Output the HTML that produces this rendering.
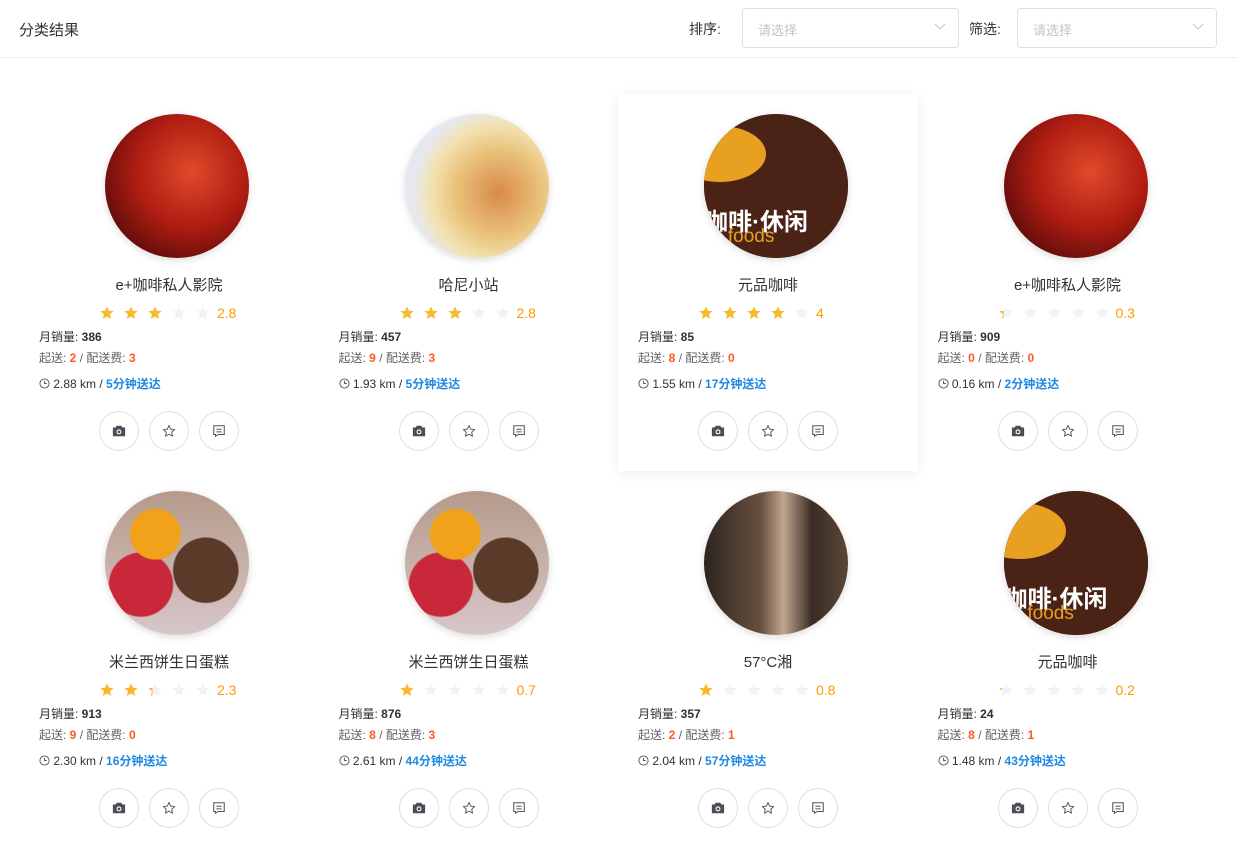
<!DOCTYPE html>
<html><head><meta charset="utf-8"><style>
*{box-sizing:border-box;margin:0;padding:0}
body{width:1237px;height:856px;overflow:hidden;background:#fff;font-family:"Liberation Sans","Noto Sans CJK SC",sans-serif;color:#303133}
.hd{height:58px;border-bottom:1px solid #ebeef5;position:relative}
.hd .t{position:absolute;left:19px;top:19px;font-size:15px;color:#303133}
.lab{position:absolute;top:19px;font-size:14px;color:#303133}
.sel{position:absolute;top:8px;height:40px;border:1px solid #dcdfe6;border-radius:4px;font-size:13px;color:#c0c4cc;padding:11px 15px}
.sel svg{position:absolute;right:12px;top:14px}
.card{position:absolute;width:300px;height:377px}
.card.hov{box-shadow:0 2px 12px rgba(0,0,0,.08)}
.img{position:absolute;left:86px;top:20px;width:144px;height:144px;border-radius:50%;overflow:hidden;box-shadow:0 2px 8px rgba(0,0,0,.15)}
.nm{position:absolute;left:0;width:300px;text-align:center;top:180px;font-size:15px;color:#303133}
.stars{position:absolute;left:80px;top:211px;height:16px;display:flex;align-items:center}
.stars svg{margin-right:8px}
.stars span{font-size:14px;color:#ff9900;margin-left:-2px}
.ln{position:absolute;left:20px;font-size:12px;color:#606266}
.ln b{color:#303133}
.or{color:#ff5722;font-weight:bold}
.bl{color:#1e88e5;font-weight:bold}
.btn{position:absolute;top:317px;width:40px;height:40px;border:1px solid #dcdfe6;border-radius:50%;display:flex;align-items:center;justify-content:center}
</style></head><body>
<div class="hd"><div class="t">分类结果</div>
<div class="lab" style="left:689px">排序:</div>
<div class="sel" style="left:742px;width:217px">请选择<svg width="12" height="8"><path d="M1 1l5 5 5-5" stroke="#c0c4cc" fill="none"/></svg></div>
<div class="lab" style="left:969px">筛选:</div>
<div class="sel" style="left:1017px;width:200px">请选择<svg width="12" height="8"><path d="M1 1l5 5 5-5" stroke="#c0c4cc" fill="none"/></svg></div>
</div>
<div id="g"></div>
<script>
const imgs={
cin:'radial-gradient(circle at 60% 40%,#e04b2a,#b01d12 45%,#5a0c0a 80%),#700',
piz:'radial-gradient(circle at 65% 55%,#d88a4a 0,#e9c27a 35%,#f2e2b0 55%,#e6e8f0 70%)',
cof:'',
cake:'radial-gradient(circle at 35% 30%,#f2a21a 0 18%,transparent 19%),radial-gradient(circle at 70% 55%,#5a3b2a 0 25%,transparent 26%),radial-gradient(circle at 25% 65%,#c8283a 0 22%,transparent 23%),linear-gradient(#b59a8a,#d8c6c8)',
rest:'linear-gradient(90deg,#2c2420,#6a5040 40%,#c0a890 55%,#3a2c24 75%,#5a4838)'};
const cofHTML='<div style="position:absolute;inset:0;background:#4a2216"></div><div style="position:absolute;left:-30px;top:12px;width:92px;height:56px;border-radius:50%;background:#e8a020"></div><div style="position:absolute;left:0;top:88px;font-size:24px;color:#fff;white-space:nowrap;font-weight:bold">咖啡·休闲</div><div style="position:absolute;left:8px;top:112px;font-size:19px;color:#e8a020;white-space:nowrap">e foods</div>';
const D=[
['cin','e+咖啡私人影院',2.8,'2.8',386,2,3,'2.88','5'],
['piz','哈尼小站',2.8,'2.8',457,9,3,'1.93','5'],
['cof','元品咖啡',4,'4',85,8,0,'1.55','17'],
['cin','e+咖啡私人影院',0.3,'0.3',909,0,0,'0.16','2'],
['cake','米兰西饼生日蛋糕',2.3,'2.3',913,9,0,'2.30','16'],
['cake','米兰西饼生日蛋糕',0.7,'0.7',876,8,3,'2.61','44'],
['rest','57°C湘',0.8,'0.8',357,2,1,'2.04','57'],
['cof','元品咖啡',0.2,'0.2',24,8,1,'1.48','43']];
const star=(f)=>{const id='s'+Math.random().toString(36).slice(2);return `<svg width="16" height="16" viewBox="0 0 24 24"><defs><linearGradient id="${id}"><stop offset="${f}" stop-color="#f7ba2a"/><stop offset="${f}" stop-color="#eff2f7"/></linearGradient></defs><path d="M12 2l2.9 6.6 7.1.6-5.4 4.7 1.6 7L12 17.3 5.8 21l1.6-7L2 9.2l7.1-.6z" fill="url(#${id})"/></svg>`};
let h='';
D.forEach((d,i)=>{const c=i%4,r=Math.floor(i/4);const x=19+c*299.5,y=94+r*377;
let st='';for(let k=0;k<5;k++){let f=Math.max(0,Math.min(1,d[2]-k));if(d[2]>=2.5&&d[2]<3&&k==2)f=1;if(d[2]>=0.5&&d[2]<1&&k==0)f=1;st+=star(f)}
const im=d[0]=='cof'?`<div class="img" style="background:#4a2216">${cofHTML}</div>`:`<div class="img" style="background:${imgs[d[0]]}"></div>`;
h+=`<div class="card${i==2?' hov':''}" style="left:${x}px;top:${y}px">${im}
<div class="nm">${d[1]}</div><div class="stars">${st}<span>${d[3]}</span></div>
<div class="ln" style="top:234px;color:#303133">月销量: <b>${d[4]}</b></div>
<div class="ln" style="top:255px">起送: <span class="or">${d[5]}</span> / 配送费: <span class="or">${d[6]}</span></div>
<div class="ln" style="top:281px;color:#303133"><svg width="11" height="11" viewBox="0 0 12 12" style="vertical-align:-1px"><circle cx="6" cy="6" r="5" fill="none" stroke="#555"/><path d="M6 3v3h2.5" fill="none" stroke="#555"/></svg> ${d[7]} km / <span class="bl">${d[8]}分钟送达</span></div>
<div class="btn" style="left:80px"><svg width="14" height="14" viewBox="0 0 16 16"><path d="M1 4h3l1.5-2h5L12 4h3v10H1z" fill="#4a4f57"/><circle cx="8" cy="9" r="2.8" fill="#fff"/><circle cx="8" cy="9" r="1.6" fill="#4a4f57"/></svg></div>
<div class="btn" style="left:130px"><svg width="14" height="14" viewBox="0 0 24 24"><path d="M12 2.5l2.9 6.3 6.9.7-5.2 4.6 1.5 6.8L12 17.4l-6.1 3.5 1.5-6.8-5.2-4.6 6.9-.7z" fill="none" stroke="#555" stroke-width="1.6" stroke-linejoin="round"/></svg></div>
<div class="btn" style="left:180px"><svg width="14" height="14" viewBox="0 0 16 16"><path d="M2 2h12v10H7l-3 2v-2H2z" fill="none" stroke="#555" stroke-width="1.2"/><path d="M5 6h6M5 9h6" stroke="#555" stroke-width="1.2"/></svg></div>
</div>`});
document.getElementById('g').innerHTML=h;
</script>
</body></html>
